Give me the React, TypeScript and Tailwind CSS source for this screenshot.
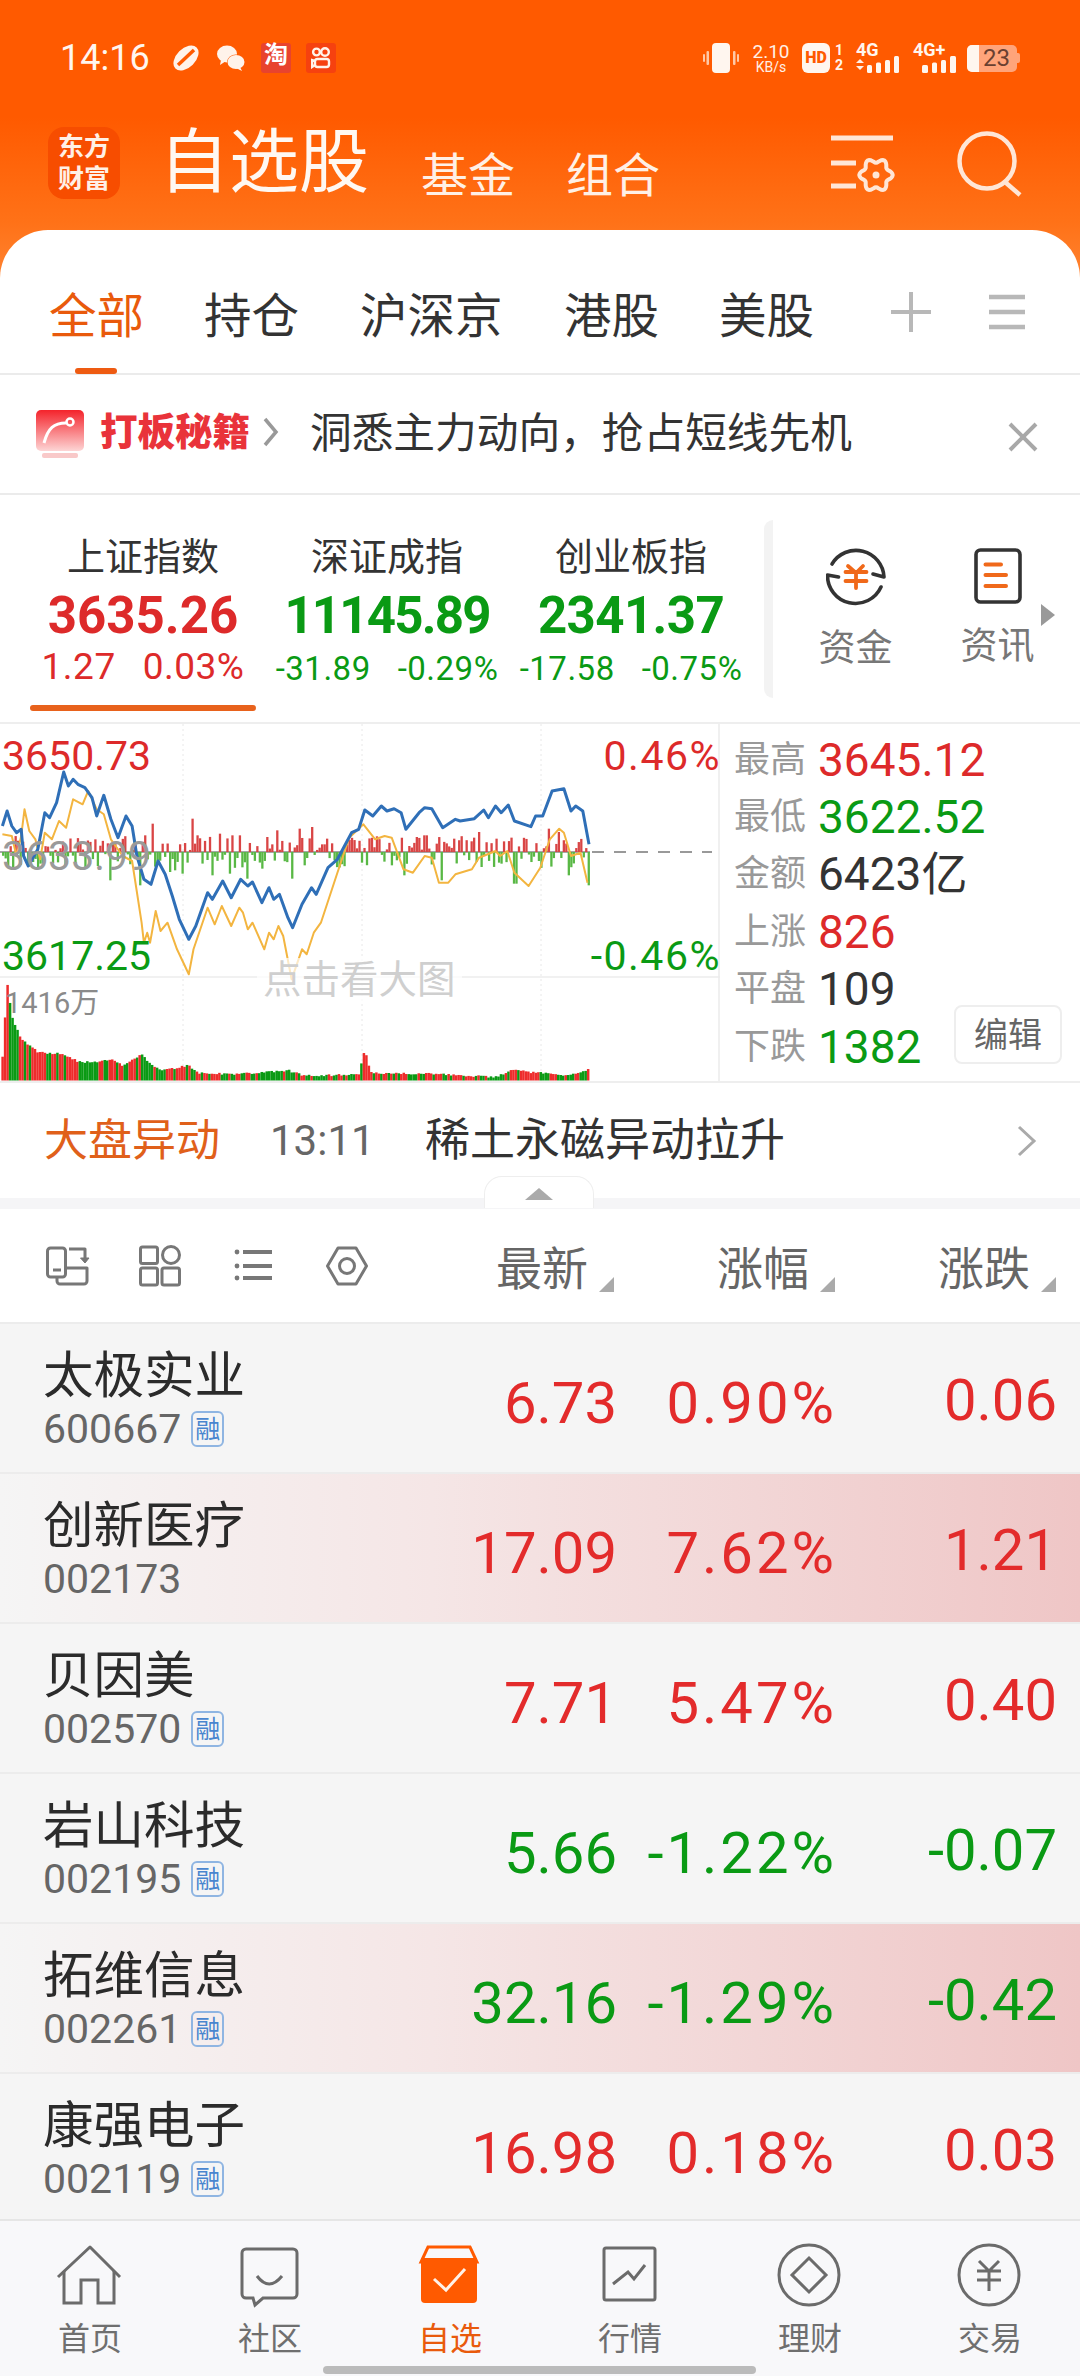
import React from "react";

const FONT = 'Roboto, "Noto Sans CJK SC", sans-serif';
const RED = "text-[#e32b2b]";
const GREEN = "text-[#0a9a14]";

function rng(seed: number) {
  let s = seed;
  return () => {
    s = (s * 16807) % 2147483647;
    return (s - 1) / 2147483646;
  };
}

const zx = (x: number) => x / 2.119;
const zy = (y: number) => y / 3 - 1.33;

const blue = [[5,310],[15,265],[25,310],[35,330],[45,320],[50,400],[60,430],[80,380],[95,270],[105,285],[120,240],[135,148],[145,190],[155,170],[165,185],[180,195],[195,225],[205,280],[220,218],[235,290],[250,345],[267,280],[280,310],[290,400],[305,470],[320,485],[335,415],[350,455],[365,520],[380,590],[400,650],[415,610],[440,510],[450,530],[472,475],[490,525],[510,470],[525,490],[535,478],[555,540],[570,495],[580,530],[592,515],[610,585],[620,615],[640,545],[660,495],[670,515],[695,435],[715,410],[745,330],[760,320],[773,262],[790,280],[808,250],[820,265],[835,258],[850,270],[860,320],[888,270],[900,255],[915,258],[938,315],[965,290],[975,295],[1005,288],[1025,262],[1035,285],[1050,250],[1062,270],[1077,247],[1090,295],[1125,312],[1135,280],[1150,280],[1170,205],[1195,198],[1210,265],[1220,250],[1235,265],[1248,365]];
const yellow = [[5,335],[25,340],[35,400],[45,340],[52,260],[62,325],[75,350],[85,410],[95,330],[110,350],[125,295],[140,315],[155,230],[175,245],[187,205],[205,260],[220,275],[235,350],[260,400],[280,415],[300,600],[305,660],[312,630],[318,660],[330,565],[340,625],[355,600],[375,680],[400,755],[410,680],[440,555],[455,605],[470,550],[490,610],[507,555],[515,570],[525,620],[535,600],[560,680],[570,630],[580,650],[590,610],[600,640],[618,770],[640,680],[650,695],[665,630],[680,600],[715,450],[740,345],[770,305],[795,350],[815,340],[830,345],[855,440],[875,450],[900,400],[915,405],[930,480],[950,480],[965,455],[1000,440],[1015,405],[1050,385],[1060,400],[1075,385],[1090,450],[1120,490],[1145,435],[1165,350],[1185,318],[1195,330],[1210,400],[1230,390],[1245,480]];
const toPts = (a: number[][]) => a.map(([x, y]) => `${zx(x).toFixed(1)},${zy(y).toFixed(1)}`).join(" ");

const spikes: [number, number][] = [[407,100],[323,85],[588,65],[660,75],[635,70],[1013,60],[1160,70],[1180,60],[308,50],[418,50],[462,55],[505,50],[490,50],[563,45],[880,45],[900,50],[962,40],[1050,40],[1090,-95],[855,-70],[1205,-70],[1248,-100],[615,-80],[525,-80],[450,-70],[230,-85],[385,-65],[360,-60],[295,-100],[645,-40],[935,-85],[1060,-35],[1020,-45],[830,-40],[370,-55],[485,-65],[555,-50]];

const flow = (() => {
  const r = rng(77);
  const out: { x: number; h: number }[] = [];
  for (let i = 0; i < 236; i++) {
    const xz = 5 + i * 5.28;
    const sign = r() > 0.5 ? 1 : -1;
    let h = sign * (6 + r() * 42);
    for (const [sx, sh] of spikes) if (Math.abs(sx - xz) < 2.7) h = sh;
    out.push({ x: xz, h });
  }
  return out;
})();

const envelope = [[5,1000],[15,775],[25,880],[35,915],[45,945],[60,965],[80,985],[100,990],[130,990],[150,1005],[170,1015],[210,1015],[235,1005],[260,1025],[300,990],[320,1025],[345,1040],[400,1025],[420,1048],[500,1052],[610,1040],[640,1055],[700,1055],[760,1052],[773,975],[785,1048],[900,1050],[1050,1060],[1090,1035],[1120,1045],[1200,1055],[1248,1038]];
const envAt = (x: number) => {
  for (let i = 0; i < envelope.length - 1; i++) {
    const [a, b] = envelope[i];
    const [c, d] = envelope[i + 1];
    if (x >= a && x <= c) return b + ((x - a) / (c - a)) * (d - b);
  }
  return 1040;
};
const vols = (() => {
  const r = rng(991);
  const out: { x: number; y: number; c: string }[] = [];
  let green = false;
  for (let i = 0; i < 236; i++) {
    const xz = 5 + i * 5.28;
    if (r() > 0.55) green = !green;
    let c = green ? "#0a9a14" : "#ee2c2c";
    if (xz > 170 && xz < 210) c = "#0a9a14";
    if (xz < 20 || Math.abs(xz - 773) < 4) c = "#ee2c2c";
    out.push({ x: xz, y: envAt(xz) + r() * 6, c });
  }
  return out;
})();

const flower = (() => {
  const pts: string[] = [];
  for (let i = 0; i < 72; i++) {
    const t = (i / 72) * Math.PI * 2;
    const rad = 14.5 + 2.2 * Math.cos(6 * t);
    pts.push(`${(47 + rad * Math.cos(t)).toFixed(1)},${(40 + rad * Math.sin(t)).toFixed(1)}`);
  }
  return pts.join(" ");
})();

function Chart() {
  return (
    <svg width="720" height="358" className="block absolute left-0 top-0">
      {[183, 362, 541].map((x) => (
        <line key={x} x1={x} x2={x} y1="0" y2="358" stroke="#e8e8e8" strokeWidth="1" strokeDasharray="2 3" />
      ))}
      <line x1="0" x2="720" y1="253" y2="253" stroke="#ececec" strokeWidth="1.5" />
      <line x1="592" x2="712" y1="128" y2="128" stroke="#999" strokeWidth="2" strokeDasharray="12 10" />
      <line x1="0" x2="590" y1="128" y2="128" stroke="#888" strokeWidth="1.5" />
      {flow.map((b, i) => (
        <rect key={i} x={zx(b.x) - 0.3} width="2.3" y={b.h > 0 ? 128 - b.h / 3 : 128} height={Math.abs(b.h) / 3} fill={b.h > 0 ? "#d94545" : "#59b845"} />
      ))}
      <polyline points={toPts(yellow)} fill="none" stroke="#f3b540" strokeWidth="2" strokeLinejoin="round" />
      <polyline points={toPts(blue)} fill="none" stroke="#2f6fb7" strokeWidth="3" strokeLinejoin="round" />
      {vols.map((b, i) => (
        <rect key={i} x={zx(b.x) - 1} width="2.5" y={zy(b.y)} height={Math.max(0, 356.5 - zy(b.y))} fill={b.c} />
      ))}
    </svg>
  );
}

function StatusBar() {
  return (
    <div className="relative h-[127px] pt-[43px] pl-[60px] pr-[60px] flex items-start justify-between">
      <div className="flex items-center h-[30px]">
        <span className="text-[36px] leading-none text-[#fff6ef] w-[112px]">14:16</span>
        <svg width="28" height="28" viewBox="0 0 28 28" className="mr-[17px]">
          <ellipse cx="14" cy="14" rx="15" ry="9.5" transform="rotate(-45 14 14)" fill="#fff3ea" />
          <path d="M6 21 L22 6" stroke="#ff5a00" strokeWidth="3.5" />
        </svg>
        <svg width="28" height="28" viewBox="0 0 28 28" className="mr-[16px]">
          <ellipse cx="10" cy="10" rx="10" ry="8.5" fill="#fff3ea" />
          <path d="M4 16 L3 21 L9 17Z" fill="#fff3ea" />
          <ellipse cx="19" cy="18" rx="9" ry="7.5" fill="#ff5a00" />
          <ellipse cx="19" cy="18" rx="8.5" ry="7" fill="#fff3ea" />
          <path d="M23 23 L25 27 L19 24Z" fill="#fff3ea" />
        </svg>
        <div className="w-[30px] h-[30px] bg-[#e8432e] rounded-[3px] flex items-start justify-center text-[24px] font-bold leading-[24px] text-white mr-[15px]">淘</div>
        <div className="w-[30px] h-[30px] bg-[#f6410f] rounded-[3px] flex items-center justify-center">
          <svg width="20" height="22" viewBox="0 0 20 22" fill="none" stroke="#fff3ea" strokeWidth="2.4">
            <circle cx="5.5" cy="5" r="3.4" />
            <circle cx="14" cy="5" r="3.8" />
            <rect x="4" y="12" width="14" height="8" rx="2.5" />
            <path d="M4 14 L1 13 V20 L4 18" />
          </svg>
        </div>
      </div>
      <div className="flex items-center h-[30px]">
        <svg width="36" height="30" viewBox="0 0 36 30" className="mr-[14px]">
          <rect x="9" y="0" width="18" height="30" rx="4" fill="#fff6ef" />
          <rect x="3.5" y="8" width="2.5" height="14" fill="#ffc8a6" rx="1" />
          <rect x="30" y="8" width="2.5" height="14" fill="#ffc8a6" rx="1" />
          <rect x="0" y="11" width="2" height="8" fill="#ffc8a6" rx="1" />
          <rect x="34" y="11" width="2" height="8" fill="#ffc8a6" rx="1" />
        </svg>
        <div className="w-[36px] text-center text-[#fff0e6] mr-[13px] whitespace-nowrap flex flex-col items-center">
          <div className="text-[19px] leading-[18px]">2.10</div>
          <div className="text-[14px] leading-[13px]">KB/s</div>
        </div>
        <div className="w-[28px] h-[30px] bg-[#fff6ef] rounded-[6px] flex items-center justify-center text-[16px] font-black text-[#ff5a00] leading-none mr-[4px]">HD</div>
        <div className="w-[10px] text-[14px] font-bold leading-[15px] text-[#fff6ef] text-center mr-[12px]">
          <div>1</div>
          <div>2</div>
        </div>
        <div className="w-[44px] mr-[13px]">
          <div className="text-[18px] font-bold leading-[13px] text-[#fff6ef]">4G</div>
          <svg width="44" height="17" viewBox="0 0 44 17" className="block">
            <path d="M0 7 L4 3 L8 7Z M0 10 L4 14 L8 10Z" fill="#fff0e6" />
            <rect x="11" y="9" width="5" height="8" rx="1.5" fill="#fff6ef" />
            <rect x="20" y="6.5" width="5" height="10.5" rx="1.5" fill="#fff6ef" />
            <rect x="29" y="4" width="5" height="13" rx="1.5" fill="#fff6ef" />
            <rect x="38" y="0" width="5" height="17" rx="1.5" fill="#fff6ef" />
          </svg>
        </div>
        <div className="w-[44px] mr-[10px]">
          <div className="text-[18px] font-bold leading-[13px] text-[#fff6ef] whitespace-nowrap">4G+</div>
          <svg width="44" height="17" viewBox="0 0 44 17" className="block">
            <rect x="9" y="9" width="6" height="8" rx="1.5" fill="#fff6ef" />
            <rect x="19" y="6.5" width="5" height="10.5" rx="1.5" fill="#fff6ef" />
            <rect x="28" y="4" width="5" height="13" rx="1.5" fill="#fff6ef" />
            <rect x="37" y="0" width="6" height="17" rx="1.5" fill="#fff6ef" />
          </svg>
        </div>
        <div className="relative w-[50px] h-[27px] rounded-[5px] bg-[#ffa47a] overflow-hidden flex items-center justify-end pr-[7px] text-[24px] leading-none text-[#6a4030]">
          <div className="absolute left-0 top-0 bottom-0 w-[12px] bg-[#fff6ef]" />
          <span className="relative">23</span>
        </div>
        <div className="w-[3px] h-[10px] bg-[#ffa47a] rounded-r-[2px]" />
      </div>
    </div>
  );
}

function Header() {
  return (
    <div className="h-[280px] bg-[linear-gradient(180deg,#ff5a00_0%,#ff5a00_42%,#ff7218_80%,#ff8432_100%)]">
      <StatusBar />
      <div className="flex items-end h-[72px] pl-[48px] relative">
        <div className="w-[72px] h-[72px] bg-[#f74d00] rounded-[16px] flex flex-col items-center justify-center text-[#fff0e6] text-[26px] font-bold leading-[32px]">
          <div>东方</div>
          <div>财富</div>
        </div>
        <div className="ml-[39px] text-[70px] leading-[72px] text-[#fff8f2] w-[262px]">自选股</div>
        <div className="text-[47px] leading-[46px] text-[#fff0e6] w-[145px]">基金</div>
        <div className="text-[47px] leading-[46px] text-[#fff0e6]">组合</div>
        <svg width="70" height="60" viewBox="0 0 70 60" className="absolute left-[829px] top-[8px]" fill="none" stroke="#ffe6d6" strokeWidth="5">
          <path d="M2 3 H64 M2 28 H27 M2 51 H27" />
          <polygon points={flower} strokeWidth="4" />
          <circle cx="47" cy="40" r="3.5" fill="#ffe6d6" stroke="none" />
        </svg>
        <svg width="68" height="68" viewBox="0 0 68 68" className="absolute left-[956px] top-[3px]" fill="none" stroke="#ffe6d6" strokeWidth="4.5">
          <circle cx="31" cy="31" r="27.5" />
          <path d="M49 52 L64 65" />
        </svg>
      </div>
    </div>
  );
}

function Tabs() {
  const items: [string, string][] = [
    ["全部", "text-[#e95a0c]"],
    ["持仓", "text-[#333]"],
    ["沪深京", "text-[#333]"],
    ["港股", "text-[#333]"],
    ["美股", "text-[#333]"],
  ];
  const widths = [155, 156, 204, 155, 172];
  return (
    <div className="relative h-[145px] border-b-2 border-[#ebebeb] flex items-start pl-[49px] pt-[62px]">
      {items.map(([t, c], i) => (
        <div key={t} style={{ width: widths[i] }} className={`text-[47.5px] leading-[50px] ${c}`}>{t}</div>
      ))}
      <svg width="40" height="40" viewBox="0 0 40 40" stroke="#b8b8b8" strokeWidth="4">
        <path d="M20 0 V40 M0 20 H40" />
      </svg>
      <svg width="36" height="36" viewBox="0 0 36 36" stroke="#b8b8b8" strokeWidth="4.5" className="ml-[58px] mt-[2px]">
        <path d="M0 3 H36 M0 18 H36 M0 33 H36" />
      </svg>
      <div className="absolute left-[75px] top-[138px] w-[42px] h-[6px] rounded-full bg-[#ee5b12]" />
    </div>
  );
}

function Banner() {
  return (
    <div className="h-[120px] border-b-2 border-[#ebebeb] flex items-start pl-[36px] pt-[35px]">
      <svg width="48" height="50" viewBox="0 0 48 50">
        <defs>
          <linearGradient id="bn" x1="0" y1="0" x2="0" y2="1">
            <stop offset="0" stopColor="#f4232b" />
            <stop offset="1" stopColor="#fdd5d5" />
          </linearGradient>
        </defs>
        <rect x="0" y="0" width="48" height="41" rx="5" fill="url(#bn)" />
        <rect x="6" y="43" width="36" height="5" rx="2" fill="#f9c9c9" />
        <path d="M8 33 C12 18 18 13 30 13" stroke="#fff" strokeWidth="3" fill="none" />
        <circle cx="34" cy="12" r="3.5" stroke="#fff" strokeWidth="2.5" fill="none" />
      </svg>
      <div className="ml-[16px] w-[152px] text-[37.5px] font-black leading-[42px] text-[#e9333a] mt-[1px] whitespace-nowrap">打板秘籍</div>
      <svg width="16" height="30" viewBox="0 0 16 30" fill="none" stroke="#999" strokeWidth="3.5" className="ml-[11px] mt-[7px]">
        <path d="M2 2 L13 15 L2 28" />
      </svg>
      <div className="ml-[31px] text-[41.7px] leading-[46px] text-[#333] whitespace-nowrap mt-[1px]">{"洞悉主力动向\uFF0C抢占短线先机"}</div>
      <svg width="30" height="30" viewBox="0 0 30 30" stroke="#a8a8a8" strokeWidth="4" className="absolute left-[1008px] mt-[12px]">
        <path d="M2 2 L28 28 M28 2 L2 28" />
      </svg>
    </div>
  );
}

function IndexCell({ name, val, a, b, up, track }: { name: string; val: string; a: string; b: string; up?: boolean; track: string }) {
  const c = up ? "text-[#dd2a2a]" : GREEN;
  return (
    <div className="w-[244px] flex flex-col items-center">
      <div className="text-[38px] leading-[40px] text-[#333] mt-[42px]">{name}</div>
      <div className={`text-[51px] leading-[50px] font-bold mt-[14px] ${track} ${c}`}>{val}</div>
      <div className={`flex gap-[27px] mt-[8px] leading-[36px] tracking-[0.5px] ${up ? "text-[37px]" : "text-[33px] pt-[2px]"} ${c}`}>
        <span>{a}</span>
        <span>{b}</span>
      </div>
    </div>
  );
}

function Indices() {
  return (
    <div className="relative h-[229px] border-b-2 border-[#eeeeee] flex pl-[21px]">
      <IndexCell name="上证指数" val="3635.26" a="1.27" b="0.03%" up track="tracking-[0px]" />
      <IndexCell name="深证成指" val="11145.89" a="-31.89" b="-0.29%" track="tracking-[-1.8px]" />
      <IndexCell name="创业板指" val="2341.37" a="-17.58" b="-0.75%" track="tracking-[-0.6px]" />
      <div className="absolute left-[30px] top-[210px] w-[226px] h-[6px] rounded-full bg-[#e8621c]" />
      <div className="absolute left-[764px] top-[25px] w-[9px] h-[178px] rounded-l-[9px] bg-[#f3f3f3]" />
      <div className="absolute left-[818px] top-[51px] w-[75px] flex flex-col items-center">
        <svg width="60" height="60" viewBox="0 0 60 60" fill="none" stroke="#333" strokeWidth="3.6" strokeLinecap="round" strokeLinejoin="round">
          <path d="M6 18 A28 28 0 0 1 58 31 L47 28" />
          <path d="M55 41 A28 28 0 0 1 1.5 29 L12.5 31" />
          <path d="M22 20 L30 27 L37 20 M19.5 26 H40.5 M19.5 35 H40.5 M30 27 V42" stroke="#f0691a" strokeWidth="3.8" />
        </svg>
        <div className="text-[37px] leading-[40px] text-[#777] mt-[23px] whitespace-nowrap">资金</div>
      </div>
      <div className="absolute left-[960px] top-[53px] w-[75px] flex flex-col items-center">
        <svg width="48" height="56" viewBox="0 0 48 56" fill="none">
          <rect x="2" y="2" width="44" height="52" rx="4.5" stroke="#333" strokeWidth="3.6" />
          <path d="M11.5 16.5 H27 M11.5 27 H32 M11.5 38 H32" stroke="#f0691a" strokeWidth="4" strokeLinecap="round" />
        </svg>
        <div className="text-[37px] leading-[40px] text-[#777] mt-[23px] whitespace-nowrap">资讯</div>
      </div>
      <svg width="16" height="24" viewBox="0 0 16 24" className="absolute left-[1040px] top-[108px]">
        <path d="M1 1 L15 12 L1 23Z" fill="#999" />
      </svg>
    </div>
  );
}

function ChartArea() {
  const rows: [string, string, string][] = [
    ["最高", "3645.12", "text-[#dd2a2a]"],
    ["最低", "3622.52", GREEN],
    ["金额", "6423亿", "text-[#333]"],
    ["上涨", "826", "text-[#dd2a2a]"],
    ["平盘", "109", "text-[#333]"],
    ["下跌", "1382", GREEN],
  ];
  return (
    <div className="relative h-[359px] border-b-2 border-[#eeeeee] flex">
      <div className="relative w-[720px] h-full border-r-2 border-[#f0f0f0]">
        <Chart />
        <div className="absolute left-[2px] top-[10px] text-[41px] leading-[44px] text-[#dd2a2a]">3650.73</div>
        <div className="absolute right-[-3px] top-[10px] text-[41px] leading-[44px] tracking-[1.5px] text-[#dd2a2a]">0.46%</div>
        <div className="absolute left-[2px] top-[110px] text-[41px] leading-[44px] text-[#9a9a9a]">3633.99</div>
        <div className="absolute left-[2px] top-[210px] text-[41px] leading-[44px] text-[#0a9a14]">3617.25</div>
        <div className="absolute right-[-3px] top-[210px] text-[41px] leading-[44px] tracking-[1.5px] text-[#0a9a14]">-0.46%</div>
        <div className="absolute left-[5px] top-[262px] text-[29px] leading-[34px] text-[#8a8a8a]">1416万</div>
        <div className="absolute left-[257px] top-[234px] px-[6px] text-[38.5px] leading-[44px] text-[#cfcfcf] bg-white/70 whitespace-nowrap">点击看大图</div>
      </div>
      <div className="pl-[14px] pt-[7px] flex flex-col">
        {rows.map(([l, v, c]) => (
          <div key={l} className="flex items-center h-[57.4px]">
            <span className="text-[36px] leading-none text-[#999] w-[84px]">{l}</span>
            <span className={`text-[46px] leading-none ${c}`}>{v}</span>
          </div>
        ))}
      </div>
      <div className="absolute left-[954px] top-[281px] w-[108px] h-[59px] border-2 border-[#eeeeee] rounded-[8px] flex items-center justify-center text-[34px] leading-none text-[#666]">编辑</div>
    </div>
  );
}

function Alert() {
  return (
    <div className="relative h-[115px] flex items-center pl-[44px]">
      <span className="text-[44px] leading-none text-[#e0601a] w-[226px]">大盘异动</span>
      <span className="text-[42px] leading-none text-[#666] w-[155px]">13:11</span>
      <span className="text-[45px] leading-none text-[#333] whitespace-nowrap">稀土永磁异动拉升</span>
      <svg width="20" height="32" viewBox="0 0 20 32" fill="none" stroke="#aaa" strokeWidth="3" className="absolute left-[1017px] top-[42px]">
        <path d="M2 2 L17 16 L2 30" />
      </svg>
    </div>
  );
}

function Gap() {
  return (
    <div className="relative h-[11px] bg-[#f5f5f7]">
      <div className="absolute left-[484px] -top-[22px] w-[110px] h-[32px] bg-white rounded-t-[18px] border-t border-x border-[#eeeeee] flex items-start justify-center pt-[11px]">
        <svg width="28" height="12" viewBox="0 0 28 12"><path d="M14 0 L28 12 H0Z" fill="#aaa" /></svg>
      </div>
    </div>
  );
}

function HeadCol({ t, w }: { t: string; w: string }) {
  return (
    <div className={`relative text-[46px] leading-[48px] text-[#666] ${w}`}>
      {t}
      <svg width="15" height="15" viewBox="0 0 15 15" className="absolute left-[103px] top-[32px]"><path d="M15 0 V15 H0Z" fill="#aaa" /></svg>
    </div>
  );
}

function Toolbar() {
  return (
    <div className="h-[115px] flex items-start pl-[46px] pt-[36px] border-b-2 border-[#ececec]">
      <div className="flex w-[450px]">
        <svg width="44" height="42" viewBox="0 0 44 42" fill="none" stroke="#777" strokeWidth="3" strokeLinejoin="round" className="mr-[49px]">
          <rect x="1.5" y="3" width="18" height="29" rx="3" />
          <path d="M7 25 H15" />
          <path d="M19.5 23 H41 V36 a3 3 0 0 1 -3 3 H14 a3 3 0 0 1 -3 -3 V32" />
          <path d="M23 4 H39 V16" />
          <path d="M34.5 13 L39 18 L43 13 Z" fill="#777" strokeWidth="1" />
        </svg>
        <svg width="42" height="42" viewBox="0 0 42 42" fill="none" stroke="#777" strokeWidth="3" className="mr-[52px]">
          <rect x="1.5" y="2" width="17" height="16.5" rx="2" />
          <circle cx="32" cy="10" r="8.5" />
          <rect x="1.5" y="23" width="17" height="17" rx="2" />
          <rect x="23" y="23" width="17.5" height="17" rx="2" />
        </svg>
        <svg width="40" height="42" viewBox="0 0 40 42" fill="none" stroke="#777" strokeWidth="4" className="mr-[53px]">
          <path d="M10 7 H39 M10 21 H39 M10 33 H39" />
          <circle cx="4" cy="7" r="2.4" fill="#777" stroke="none" />
          <circle cx="4" cy="21" r="2.4" fill="#777" stroke="none" />
          <circle cx="4" cy="33" r="2.4" fill="#777" stroke="none" />
        </svg>
        <svg width="42" height="42" viewBox="0 0 42 42" fill="none" stroke="#777" strokeWidth="3">
          <path d="M1.5 21 L12 3 H30 L40.5 21 L30 39 H12 Z" strokeLinejoin="round" />
          <circle cx="21" cy="21" r="7.5" />
        </svg>
      </div>
      <HeadCol t="最新" w="w-[221px]" />
      <HeadCol t="涨幅" w="w-[221px]" />
      <HeadCol t="涨跌" w="w-[100px]" />
    </div>
  );
}

type Stock = { name: string; code: string; rzr?: boolean; price: string; pct: string; chg: string; up: boolean; hot?: boolean };
const stocks: Stock[] = [
  { name: "太极实业", code: "600667", rzr: true, price: "6.73", pct: "0.90%", chg: "0.06", up: true },
  { name: "创新医疗", code: "002173", price: "17.09", pct: "7.62%", chg: "1.21", up: true, hot: true },
  { name: "贝因美", code: "002570", rzr: true, price: "7.71", pct: "5.47%", chg: "0.40", up: true },
  { name: "岩山科技", code: "002195", rzr: true, price: "5.66", pct: "-1.22%", chg: "-0.07", up: false },
  { name: "拓维信息", code: "002261", rzr: true, price: "32.16", pct: "-1.29%", chg: "-0.42", up: false, hot: true },
  { name: "康强电子", code: "002119", rzr: true, price: "16.98", pct: "0.18%", chg: "0.03", up: true },
];

function Row({ s }: { s: Stock }) {
  const c = s.up ? RED : GREEN;
  return (
    <div className={`h-[150px] shrink-0 flex border-b-2 border-[#ececec] pl-[43px] ${s.hot ? "bg-[linear-gradient(90deg,#f5f5f5_0%,#f5e6e6_40%,#efc6c6_100%)]" : "bg-[#f5f5f5]"}`}>
      <div className="flex-1 pt-[24px]">
        <div className="text-[50.5px] leading-[56px] text-[#2b2b2b]">{s.name}</div>
        <div className="flex items-center mt-[6px] h-[38px]">
          <span className="text-[41px] leading-none text-[#666]">{s.code}</span>
          <span className="contents">
            {s.rzr && (
              <span className="ml-[10px] w-[33px] h-[36px] border-2 border-[#8fb5e2] rounded-[6px] flex items-center justify-center text-[25px] leading-none text-[#4a86cf]">融</span>
            )}
          </span>
        </div>
      </div>
      <div className={`w-[300px] text-right text-[58px] leading-[60px] pt-[49px] ${c}`}>{s.price}</div>
      <div className={`w-[220px] text-right text-[58px] leading-[60px] tracking-[3px] pt-[49px] ${c}`}>{s.pct}</div>
      <div className={`w-[220px] text-right text-[58px] leading-[60px] pt-[46px] mr-[23px] ${c}`}>{s.chg}</div>
    </div>
  );
}

function NavItem({ label, active, children }: { label: string; active?: boolean; children: React.ReactNode }) {
  return (
    <div className="flex flex-col items-center pt-[21px]">
      <svg width="180" height="70" viewBox="0 0 180 70" fill="none" stroke="#6b6b6b" strokeWidth="3">{children}</svg>
      <div className={`text-[32px] leading-[36px] mt-[9px] ${active ? "text-[#e95a0c]" : "text-[#6f6f6f]"}`}>{label}</div>
    </div>
  );
}

function BottomNav() {
  return (
    <div className="relative h-[157px] shrink-0 bg-[#f8f8fa] border-t-2 border-[#e6e6e6] grid grid-cols-6">
      <NavItem label="首页">
        <path d="M58 35 L90 5 L120 35" strokeLinejoin="round" />
        <path d="M64 29 V61 H81 V38 H98 V61 H114 V29" />
      </NavItem>
      <NavItem label="社区">
        <path d="M66 7 H113 a4 4 0 0 1 4 4 V52 a4 4 0 0 1 -4 4 H83 L75 63 L73 56 H66 a4 4 0 0 1 -4 -4 V11 a4 4 0 0 1 4 -4 Z" />
        <path d="M77 34 Q89 50 102 34" />
      </NavItem>
      <NavItem label="自选" active>
        <path d="M68 5 H110 L117 20 H61 Z" stroke="#ff5a00" strokeWidth="3" />
        <path d="M61 16 H117 V57 a4 4 0 0 1 -4 4 H65 a4 4 0 0 1 -4 -4 Z" fill="#ff5a00" stroke="none" />
        <path d="M74 37 L86 48 L105 27" stroke="#fff2e8" strokeWidth="3" />
      </NavItem>
      <NavItem label="行情">
        <rect x="64" y="6" width="51" height="52" rx="2" />
        <path d="M73 42 L88 30 L94 37 L105 23" />
      </NavItem>
      <NavItem label="理财">
        <circle cx="89" cy="33" r="30" />
        <path d="M89 16 L106 33 L89 50 L72 33 Z" />
      </NavItem>
      <NavItem label="交易">
        <circle cx="89" cy="33" r="30" />
        <path d="M79 19 L89 29 L99 19 M77 29 H101 M77 38 H101 M89 29 V49" />
      </NavItem>
      <div className="absolute left-[323px] top-[145px] w-[433px] h-[8px] rounded-full bg-[#bbbbbb]" />
    </div>
  );
}

export default function App() {
  return (
    <div className="relative w-[1080px] h-[2376px] overflow-hidden bg-white flex flex-col" style={{ fontFamily: FONT }}>
      <Header />
      <div className="relative -mt-[50px] bg-white rounded-t-[48px] flex-1 min-h-0 flex flex-col">
        <Tabs />
        <Banner />
        <Indices />
        <ChartArea />
        <Alert />
        <Gap />
        <Toolbar />
        <div className="flex-1 min-h-0 overflow-hidden flex flex-col bg-[#f5f5f5]">
          {stocks.map((s) => (
            <Row key={s.code} s={s} />
          ))}
        </div>
        <BottomNav />
      </div>
    </div>
  );
}
